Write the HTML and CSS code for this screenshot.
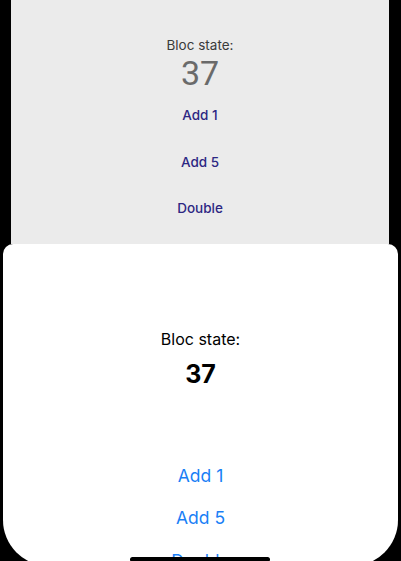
FILE: index.html
```html
<!DOCTYPE html>
<html>
<head>
<meta charset="utf-8">
<link rel="stylesheet" href="styles.css">
</head>
<body>
<div class="screen">
  <div class="page">
    <div class="page-label">Bloc state:</div>
    <div class="page-count">37</div>
    <div class="page-buttons">
      <div class="page-btn">Add 1</div>
      <div class="page-btn">Add 5</div>
      <div class="page-btn">Double</div>
    </div>
  </div>
  <div class="sheet">
    <div class="sheet-label">Bloc state:</div>
    <div class="sheet-count">37</div>
    <div class="sheet-buttons">
      <div class="sheet-btn">Add 1</div>
      <div class="sheet-btn">Add 5</div>
      <div class="sheet-btn">Double</div>
    </div>
  </div>
  <div class="home-indicator"></div>
</div>
</body>
</html>
```
FILE: styles.css
```css
html, body {
  margin: 0;
  padding: 0;
  background: #000;
  width: 401px;
  height: 561px;
  overflow: hidden;
}

.screen {
  position: relative;
  width: 401px;
  height: 561px;
  overflow: hidden;
  display: flex;
  flex-direction: column;
}

.page {
  margin: 0 12px 0 11px;
  height: 244px;
  flex: none;
  background: #ebebeb;
  display: flex;
  flex-direction: column;
  align-items: center;
  padding-top: 35px;
  box-sizing: border-box;
  font-family: Inter, "Noto Sans", sans-serif;
}

.page-label {
  font-size: 13.5px;
  line-height: 20px;
  color: #3a3a3a;
}

.page-count {
  font-family: Roboto, "Noto Sans", sans-serif;
  font-size: 34px;
  line-height: 36px;
  color: #6a6a6a;
  margin-top: -0.5px;
}

.page-buttons {
  display: flex;
  flex-direction: column;
  align-items: center;
  gap: 26.5px;
  margin-top: 14.5px;
}

.page-btn {
  font-size: 13.5px;
  line-height: 20px;
  font-weight: 500;
  color: #2d2783;
}

.sheet {
  margin: 0 3px;
  height: 322px;
  flex: none;
  background: #fff;
  border-radius: 10px 10px 46px 46px;
  display: flex;
  flex-direction: column;
  align-items: center;
  padding-top: 85px;
  box-sizing: border-box;
  font-family: Inter, "Noto Sans", sans-serif;
}

.sheet-label {
  font-size: 16px;
  line-height: 20px;
  color: #000;
}

.sheet-count {
  font-size: 25px;
  line-height: 30px;
  font-weight: 700;
  color: #000;
  margin-top: 10px;
}

.sheet-buttons {
  display: flex;
  flex-direction: column;
  align-items: center;
  gap: 18.5px;
  margin-top: 74.5px;
}

.sheet-btn {
  font-size: 17.5px;
  line-height: 24px;
  color: #1a7ff6;
}

.home-indicator {
  position: absolute;
  left: 130px;
  top: 557px;
  width: 140px;
  height: 5px;
  border-radius: 3px;
  background: #000;
}
```
